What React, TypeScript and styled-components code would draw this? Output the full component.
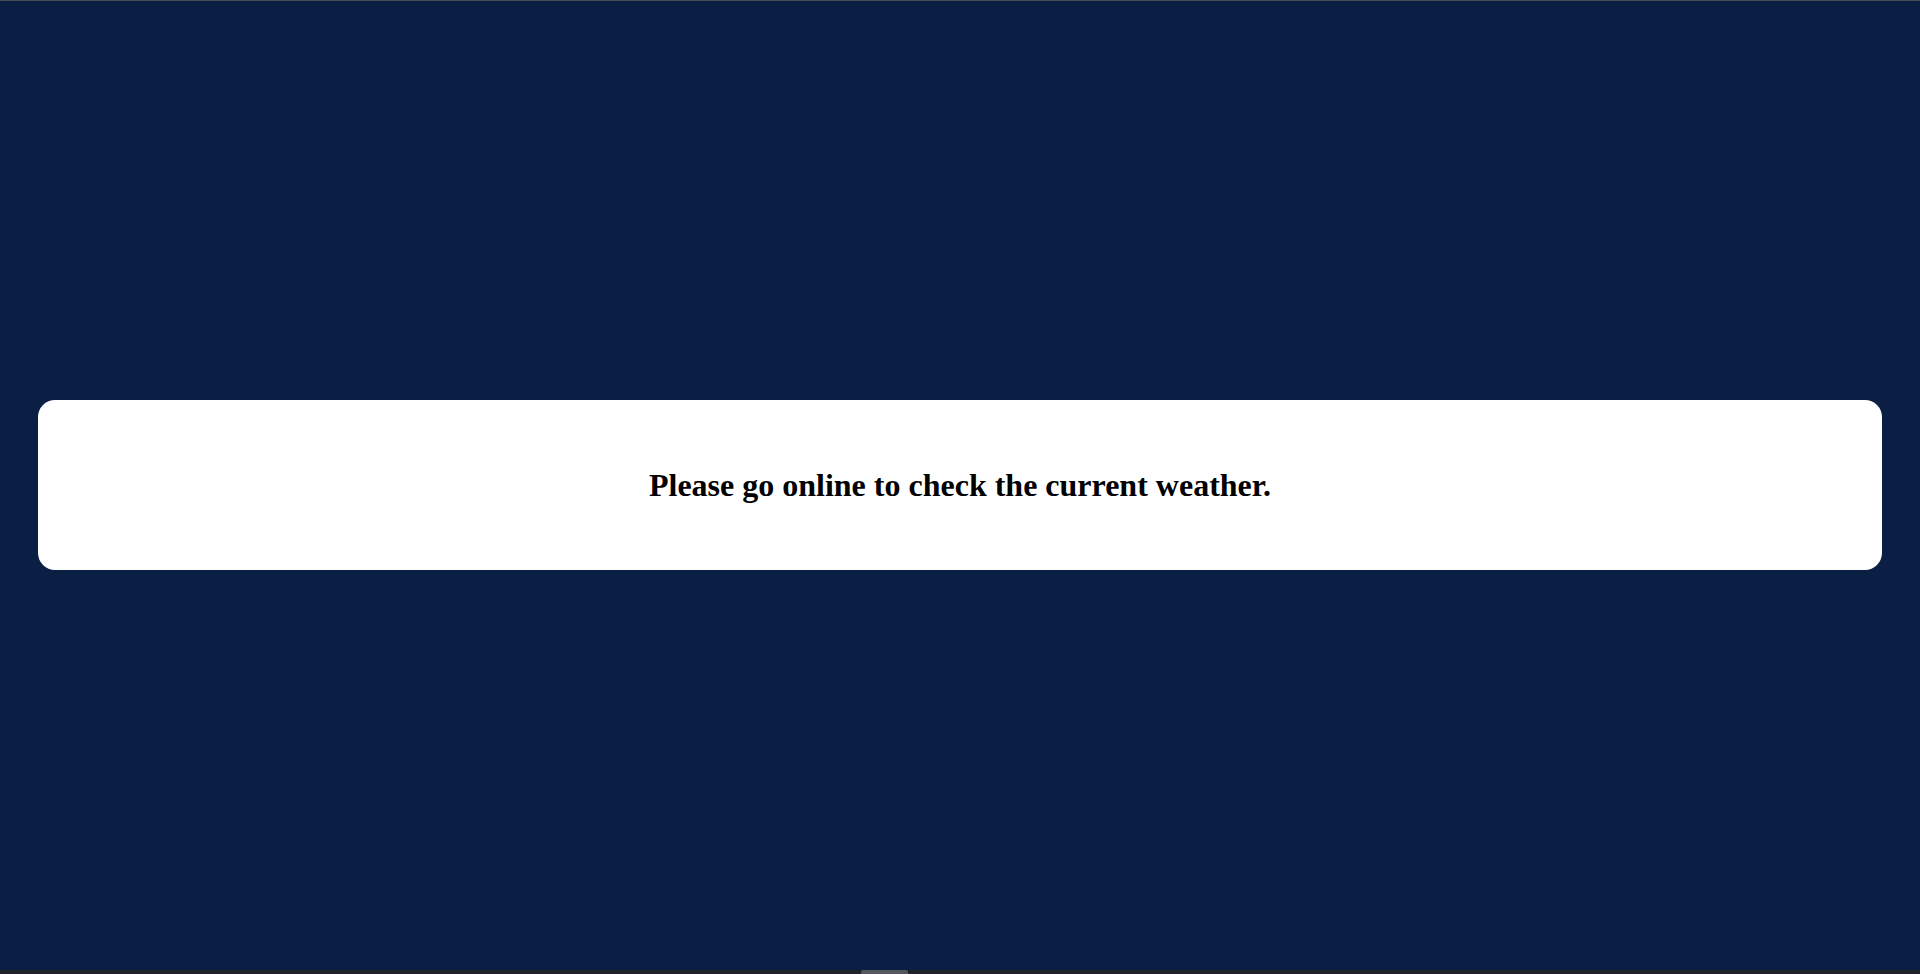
import React from "react";
import styled, { createGlobalStyle } from "styled-components";

const Global = createGlobalStyle`
  html, body { margin: 0; padding: 0; height: 100%; }
  body { background: #0b1f45; font-family: "Liberation Serif", "Times New Roman", serif; }
  #root { height: 100%; }
`;

const Page = styled.div`
  height: 974px;
  display: flex;
  flex-direction: column;
  overflow: hidden;
`;

const TopEdge = styled.div`
  height: 1px;
  background: #4a4d55;
  flex: none;
`;

const Main = styled.main`
  flex: 1;
  display: flex;
  align-items: center;
  padding: 0 38px;
  padding-bottom: 2px;
`;

const Card = styled.section`
  flex: 1;
  height: 170px;
  background: #ffffff;
  border-radius: 17px;
  display: flex;
  align-items: center;
  justify-content: center;
`;

const Message = styled.h2`
  margin: 0;
  padding-top: 2px;
  font-family: "Liberation Serif", "Times New Roman", serif;
  font-weight: 700;
  font-size: 32px;
  color: #000;
`;

const BottomBar = styled.div`
  height: 4px;
  background: #222326;
  flex: none;
  display: flex;
  padding-left: 861px;
`;

const Handle = styled.div`
  width: 47px;
  height: 4px;
  border-radius: 2px 2px 0 0;
  background: #55575c;
`;

export default function App() {
  return (
    <>
      <Global />
      <Page>
        <TopEdge />
        <Main>
          <Card>
            <Message>Please go online to check the current weather.</Message>
          </Card>
        </Main>
        <BottomBar>
          <Handle />
        </BottomBar>
      </Page>
    </>
  );
}
